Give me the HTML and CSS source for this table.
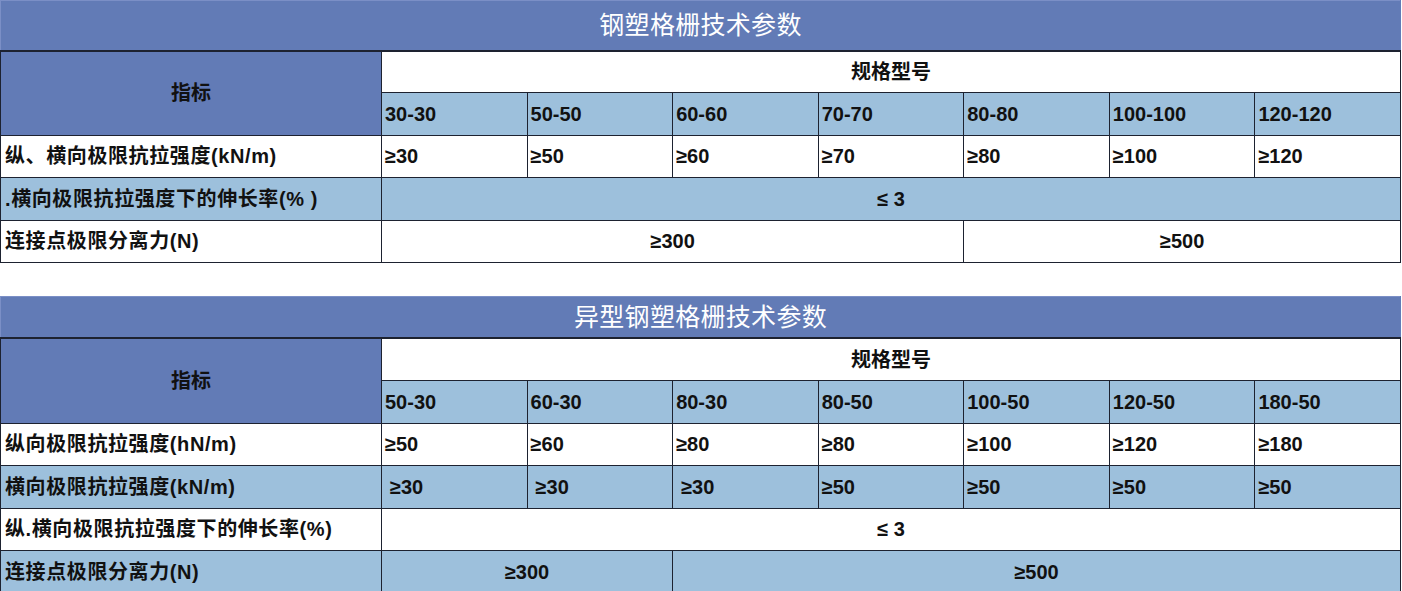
FILE: index.html
```html
<!DOCTYPE html>
<html lang="zh">
<head>
<meta charset="utf-8">
<title>钢塑格栅技术参数</title>
<link rel="stylesheet" href="styles.css">
</head>
<body>
<div class="page">
  <table class="spec first">
    <colgroup>
      <col class="c-label"><col><col><col><col><col><col><col>
    </colgroup>
    <tr class="row-title">
      <td colspan="8" class="title">钢塑格栅技术参数</td>
    </tr>
    <tr>
      <td rowspan="2" class="head-label">指标</td>
      <td colspan="7" class="head-group">规格型号</td>
    </tr>
    <tr class="light">
      <td>30-30</td><td>50-50</td><td>60-60</td><td>70-70</td><td>80-80</td><td>100-100</td><td>120-120</td>
    </tr>
    <tr>
      <td class="label">纵、横向极限抗拉强度(kN/m)</td>
      <td>≥30</td><td>≥50</td><td>≥60</td><td>≥70</td><td>≥80</td><td>≥100</td><td>≥120</td>
    </tr>
    <tr class="light">
      <td class="label">.横向极限抗拉强度下的伸长率(% )</td>
      <td colspan="7" class="center">≤ 3</td>
    </tr>
    <tr>
      <td class="label">连接点极限分离力(N)</td>
      <td colspan="4" class="center">≥300</td>
      <td colspan="3" class="center">≥500</td>
    </tr>
  </table>

  <table class="spec second">
    <colgroup>
      <col class="c-label"><col><col><col><col><col><col><col>
    </colgroup>
    <tr class="row-title">
      <td colspan="8" class="title">异型钢塑格栅技术参数</td>
    </tr>
    <tr>
      <td rowspan="2" class="head-label">指标</td>
      <td colspan="7" class="head-group">规格型号</td>
    </tr>
    <tr class="light">
      <td>50-30</td><td>60-30</td><td>80-30</td><td>80-50</td><td>100-50</td><td>120-50</td><td>180-50</td>
    </tr>
    <tr>
      <td class="label">纵向极限抗拉强度(hN/m)</td>
      <td>≥50</td><td>≥60</td><td>≥80</td><td>≥80</td><td>≥100</td><td>≥120</td><td>≥180</td>
    </tr>
    <tr class="light">
      <td class="label">横向极限抗拉强度(kN/m)</td>
      <td class="ind">≥30</td><td class="ind">≥30</td><td class="ind">≥30</td><td>≥50</td><td>≥50</td><td>≥50</td><td>≥50</td>
    </tr>
    <tr>
      <td class="label">纵.横向极限抗拉强度下的伸长率(%)</td>
      <td colspan="7" class="center">≤ 3</td>
    </tr>
    <tr class="light">
      <td class="label">连接点极限分离力(N)</td>
      <td colspan="2" class="center">≥300</td>
      <td colspan="5" class="center">≥500</td>
    </tr>
  </table>
</div>
</body>
</html>
```

FILE: styles.css
```css
html, body {
  margin: 0;
  padding: 0;
  background: #ffffff;
}

.page {
  display: flex;
  flex-direction: column;
  gap: 33px;
  width: 1402px;
}

.spec {
  width: 1401px;
  table-layout: fixed;
  border-collapse: collapse;
  font-family: "Liberation Sans", "Noto Sans CJK SC", sans-serif;
  font-weight: bold;
  font-size: 20px;
  color: #111111;
}

.spec col.c-label {
  width: 381px;
}

.spec td {
  border: 1px solid #1d2230;
  height: 42.4px;
  padding: 0 0 0 3px;
  box-sizing: border-box;
  white-space: nowrap;
  overflow: hidden;
  line-height: 1;
  vertical-align: middle;
  text-align: left;
  background: #ffffff;
}

.spec .light td {
  background: #9dc0dc;
}

.spec td.title {
  background: #627bb6;
  color: #ffffff;
  font-weight: normal;
  font-size: 25px;
  letter-spacing: 0.3px;
  text-align: center;
  border-color: #7b8fc6 #627bb6 #1d2230 #7b8fc6;
  border-bottom-width: 2px;
  padding: 0;
}

.first .row-title td.title {
  height: 50px;
}

.second .row-title td.title {
  height: 42px;
}

.spec td.head-label {
  background: #627bb6;
  text-align: center;
  padding: 0;
}

.spec td.head-group {
  text-align: center;
  padding: 0;
}

.spec td.label {
  padding-left: 4px;
  letter-spacing: 0.6px;
}

.spec td.center {
  text-align: center;
  padding: 0;
}

.spec td.ind {
  padding-left: 8px;
}
```
